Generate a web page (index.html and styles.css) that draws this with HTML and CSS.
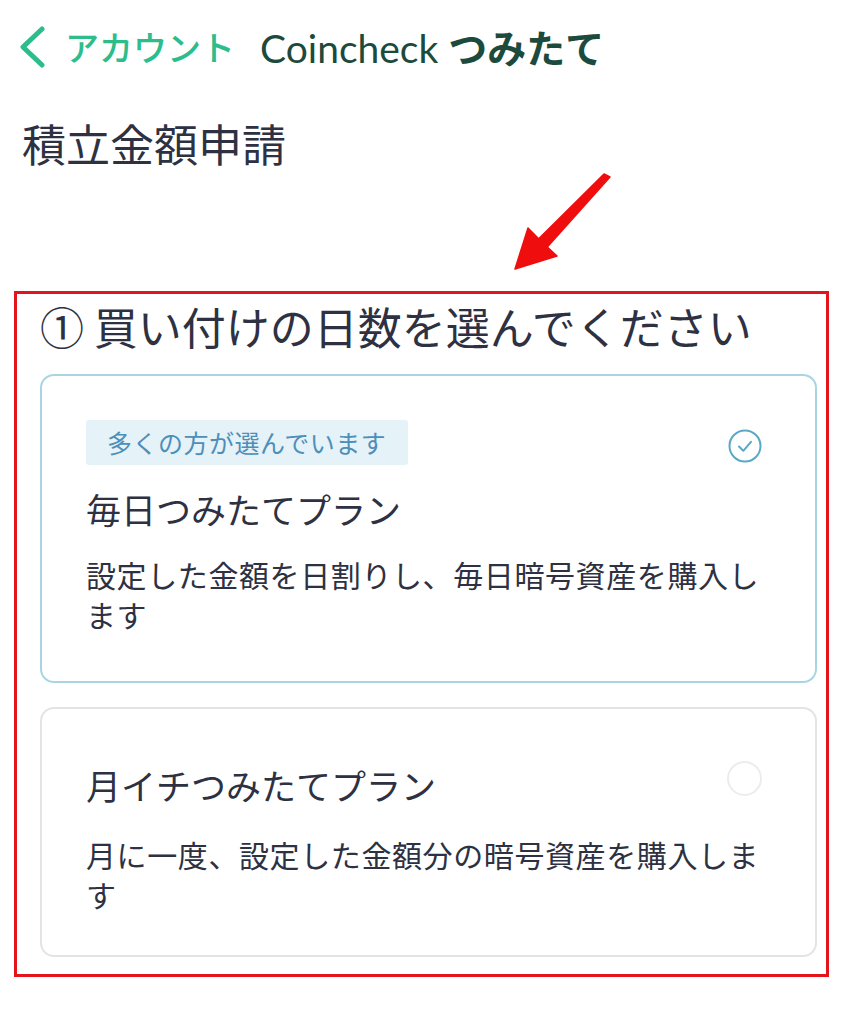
FILE: index.html
```html
<html>
	<head>
		<meta charset="UTF-8"/>
		<link rel="stylesheet" href="styles.css">
	</head>
	<body>
		<div id="topBar">
			<svg class="backIcon" width="30" height="42" viewBox="0 0 30 42"><polyline points="25,3 6,21 25,39" fill="none" stroke="#2dbd8c" stroke-width="5" stroke-linecap="round" stroke-linejoin="round"/></svg>
			<span class="backText">アカウント</span>
			<span class="appName">Coincheck <b>つみたて</b></span>
		</div>
		<h1 class="pageTitle">積立金額申請</h1>
		<svg class="arrowBox" width="857" height="118" viewBox="0 0 857 118"><polygon points="515,96 528,55 538.7,65.9 604,1 610,4 547.3,74.1 557,83" fill="#f00d0d" stroke="#f00d0d" stroke-width="1.5" stroke-linejoin="round"/></svg>
		<div id="planBox">
			<h2 class="stepTitle">① 買い付けの日数を選んでください</h2>
			<div class="planCard selected">
				<div class="cardTop">
					<span class="badge">多くの方が選んでいます</span>
					<svg class="checkIcon" width="34" height="34" viewBox="0 0 34 34"><circle cx="17" cy="17" r="15.5" fill="none" stroke="#5aa8c5" stroke-width="2"/><polyline points="11,17.5 15.3,21.8 23,12.8" fill="none" stroke="#5aa8c5" stroke-width="2" stroke-linecap="round" stroke-linejoin="round"/></svg>
				</div>
				<div class="planName">毎日つみたてプラン</div>
				<div class="planText">設定した金額を日割りし、毎日暗号資産を購入します</div>
			</div>
			<div class="planCard second">
				<div class="cardTop">
					<div class="planName">月イチつみたてプラン</div>
					<div class="radioIcon"></div>
				</div>
				<div class="planText">月に一度、設定した金額分の暗号資産を購入します</div>
			</div>
		</div>
	</body>
</html>
```
FILE: styles.css
```css
body{
	margin:0;
	background:#fff;
	font-family:"Noto Sans CJK JP","Noto Sans",sans-serif;
	color:#2d3142;
}
#topBar{
	display:flex;
	align-items:center;
	height:94px;
	padding-left:17px;
	font-size:34px;
	line-height:40px;
}
.backIcon{
	display:block;
	margin-right:18px;
}
.backText{
	color:#2dbd8c;
	font-weight:500;
}
.appName{
	margin-left:25px;
	color:#1c4a3c;
	font-size:39px;
	font-family:Lato,"Noto Sans CJK JP",sans-serif;
}
.appName b{
	font-family:"Noto Sans CJK JP",sans-serif;
	font-weight:700;
}
.pageTitle{
	margin:19px 0 0 22px;
	font-size:44px;
	line-height:60px;
	font-weight:400;
}
.arrowBox{
	display:block;
}
#planBox{
	margin-left:14px;
	width:815px;
	box-sizing:border-box;
	border:3px solid #e3141b;
	padding:3px 9px 17px 23px;
}
.stepTitle{
	margin:0;
	font-size:44px;
	line-height:58px;
	font-weight:400;
}
.planCard{
	border:2px solid #e4e4e4;
	border-radius:14px;
	padding:44px 46px 47px 44px;
	margin-top:24px;
}
.stepTitle + .planCard{
	margin-top:19px;
}
.planCard.selected{
	border-color:#a9d5e2;
}
.planCard.second{
	padding:52px 46px 41px 44px;
}
.cardTop{
	display:flex;
	justify-content:space-between;
	align-items:center;
}
.second .cardTop{
	align-items:flex-start;
}
.badge{
	display:block;
	height:45px;
	line-height:45px;
	padding:0 22px 0 21px;
	background:#e5f2f8;
	border-radius:3px;
	color:#4d8fb8;
	font-size:25px;
	letter-spacing:0.5px;
}
.checkIcon{
	display:block;
	margin-right:7px;
	margin-top:6px;
}
.radioIcon{
	width:31px;
	height:31px;
	border:2px solid #ececec;
	border-radius:50%;
	margin-right:7px;
}
.planName{
	margin-top:20px;
	font-size:35px;
	line-height:48px;
}
.second .planName{
	margin-top:0;
}
.planText{
	margin-top:21px;
	font-size:30px;
	line-height:40px;
	letter-spacing:0.6px;
}
.second .planText{
	margin-top:25px;
}
```
